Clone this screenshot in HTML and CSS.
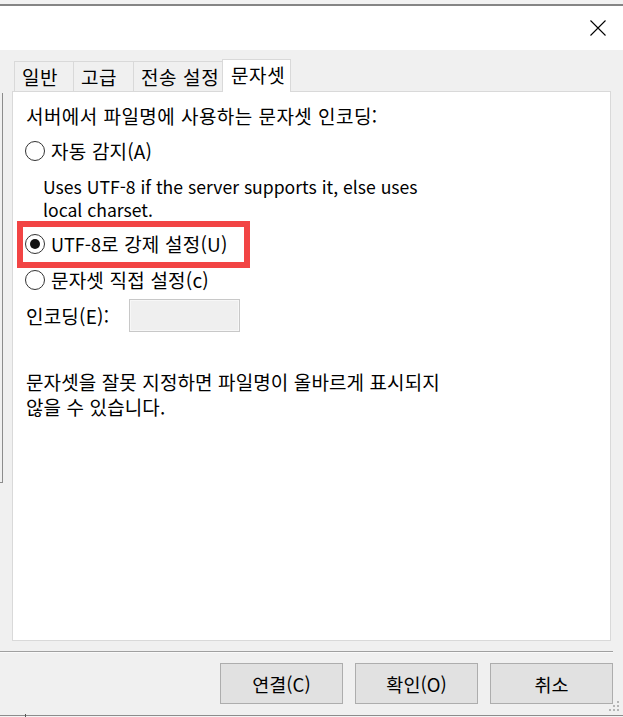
FILE: index.html
```html
<!DOCTYPE html>
<html lang="ko">
<head>
<meta charset="utf-8">
<title>문자셋</title>
<link rel="stylesheet" href="styles.css">
</head>
<body>
<div class="window">
  <div class="behind-edge"></div>
  <div class="topstrip"></div>
  <header class="titlebar">
    <svg class="close" width="16" height="16" viewBox="0 0 16 16" aria-label="닫기">
      <path d="M0.5 0.5 L15.5 15.5 M15.5 0.5 L0.5 15.5" stroke="#000" stroke-width="1.1" fill="none"/>
    </svg>
  </header>
  <main class="dialog">
    <div class="tabs">
      <div class="tab tab-general">일반</div>
      <div class="tab tab-advanced">고급</div>
      <div class="tab tab-transfer">전송 설정</div>
      <div class="tab tab-charset active">문자셋</div>
    </div>
    <section class="panel">
      <div class="line heading ko">서버에서 파일명에 사용하는 문자셋 인코딩:</div>
      <label class="radio-row auto">
        <span class="radio"></span><span class="radio-text ko">자동 감지(A)</span>
      </label>
      <div class="desc">
        <div class="desc-line">Uses UTF-8 if the server supports it, else uses</div>
        <div class="desc-line">local charset.</div>
      </div>
      <label class="radio-row forced">
        <span class="radio checked"></span><span class="radio-text ko"><span class="lat">UTF-8</span>로 강제 설정(U)</span>
        <span class="highlight"></span>
      </label>
      <label class="radio-row custom">
        <span class="radio"></span><span class="radio-text ko">문자셋 직접 설정(c)</span>
      </label>
      <div class="encoding-row">
        <span class="encoding-label ko">인코딩(E):</span>
        <span class="encoding-input"></span>
      </div>
      <div class="warning ko">
        <div class="warn-line">문자셋을 잘못 지정하면 파일명이 올바르게 표시되지</div>
        <div class="warn-line">않을 수 있습니다.</div>
      </div>
    </section>
  </main>
  <div class="separator"></div>
  <footer class="buttons">
    <button class="btn">연결(C)</button>
    <button class="btn">확인(O)</button>
    <button class="btn">취소</button>
  </footer>
  <div class="bottomline"><span class="tick"></span></div>
  <div class="grip">
    <span class="dot d1"></span><span class="dot d2"></span><span class="dot d3"></span>
    <span class="dot d4"></span><span class="dot d5"></span><span class="dot d6"></span>
  </div>
</div>
</body>
</html>
```
FILE: styles.css
```css
* { box-sizing: border-box; }
html, body {
  margin: 0;
  padding: 0;
  width: 623px;
  height: 717px;
  overflow: hidden;
  background: #f0f0f0;
}
body {
  font-family: "Noto Sans CJK KR", "Noto Sans", sans-serif;
  font-size: 18px;
  color: #000;
}
.ko {
  font-size: 19px;
  letter-spacing: 0.2px;
}
.lat {
  font-size: 18px;
  letter-spacing: 0;
}
.window {
  position: relative;
  width: 623px;
  height: 717px;
  background: #f0f0f0;
}
.behind-edge {
  position: absolute;
  left: 0;
  top: 93px;
  width: 3px;
  height: 390px;
  border-right: 1px solid #8c8c8c;
  border-bottom: 1px solid #8c8c8c;
}
.topstrip {
  height: 6px;
  background: #f2f2f2;
  border-bottom: 2px solid #858585;
}
.titlebar {
  height: 44px;
  background: #fff;
  display: flex;
  justify-content: flex-end;
  align-items: flex-start;
  padding-top: 14px;
  padding-right: 17px;
}
.close { display: block; }
.dialog {
  padding-top: 9px;
  padding-left: 12px;
}
.tabs {
  display: flex;
  align-items: flex-end;
  height: 32px;
  padding-left: 2px;
}
.tab {
  height: 30px;
  line-height: 29px;
  border: 1px solid #d9d9d9;
  border-bottom: none;
  padding-left: 7px;
  white-space: nowrap;
  margin-right: -1px;
  background: #f0f0f0;
  font-size: 19px;
  letter-spacing: 0.6px;
}
.tab-general { width: 60px; }
.tab-advanced { width: 61px; }
.tab-transfer { width: 90px; padding-left: 7px; }
.tab-charset { width: 69px; }
.tab.active {
  height: 33px;
  line-height: 30px;
  background: #fff;
  position: relative;
  z-index: 2;
  margin-bottom: -1px;
  padding-left: 8px;
}
.panel {
  width: 599px;
  height: 550px;
  background: #fff;
  border: 1px solid #d9d9d9;
  padding-left: 13px;
  padding-top: 12px;
  position: relative;
  z-index: 1;
}
.line, .radio-row {
  height: 24px;
  line-height: 24px;
  white-space: nowrap;
}
.radio-row {
  display: flex;
  align-items: center;
  position: relative;
  margin-left: -1px;
}
.radio {
  width: 20px;
  height: 20px;
  border: 1px solid #333;
  border-radius: 50%;
  background: #fff;
  flex: none;
  display: flex;
  align-items: center;
  justify-content: center;
}
.radio.checked::after {
  content: "";
  width: 10px;
  height: 10px;
  border-radius: 50%;
  background: #111;
}
.radio-text { margin-left: 6px; }
.auto { margin-top: 11px; }
.desc {
  margin-top: 12px;
  padding-left: 17px;
  font-size: 17.6px;
}
.desc-line {
  height: 23px;
  line-height: 23px;
  white-space: nowrap;
}
.forced { margin-top: 11px; }
.highlight {
  position: absolute;
  left: -8px;
  top: -11px;
  width: 233px;
  height: 47px;
  border: 6px solid #f24444;
  pointer-events: none;
}
.custom { margin-top: 12px; }
.encoding-row {
  display: flex;
  align-items: center;
  margin-top: 7px;
  height: 33px;
}
.encoding-label {
  width: 103px;
  white-space: nowrap;
}
.encoding-input {
  width: 111px;
  height: 33px;
  border: 1px solid #c8c8c8;
  background: #efefef;
  box-shadow: inset 0 0 0 1px #f7f7f7;
}
.warning { margin-top: 37px; letter-spacing: 0.1px; }
.warn-line {
  height: 25px;
  line-height: 25px;
  white-space: nowrap;
}
.heading { letter-spacing: 0.45px; }
.separator {
  margin-top: 10px;
  width: 613px;
  height: 2px;
  border-top: 1px solid #a0a0a0;
  border-bottom: 1px solid #fafafa;
}
.buttons {
  margin-top: 10px;
  display: flex;
  justify-content: flex-end;
  gap: 12px;
  padding-right: 10px;
}
.btn {
  width: 123px;
  height: 41px;
  background: #e1e1e1;
  border: 1px solid #adadad;
  font-family: "Noto Sans CJK KR", "Noto Sans", sans-serif;
  font-size: 18.5px;
  color: #000;
  padding: 0;
  border-radius: 0;
}
.bottomline {
  margin-top: 11px;
  height: 2px;
  border-top: 1px solid #8c8c8c;
  background: #f4f4f4;
  position: relative;
}
.tick {
  position: absolute;
  left: 25px;
  top: -2px;
  width: 1px;
  height: 4px;
  background: #555;
}
.grip {
  position: absolute;
  left: 608px;
  top: 700px;
  width: 12px;
  height: 12px;
}
.dot {
  position: absolute;
  width: 2px;
  height: 2px;
  background: #b5b5b5;
}
.d1 { left: 9px; top: 1px; }
.d2 { left: 5px; top: 5px; }
.d3 { left: 9px; top: 5px; }
.d4 { left: 1px; top: 9px; }
.d5 { left: 5px; top: 9px; }
.d6 { left: 9px; top: 9px; }
```
